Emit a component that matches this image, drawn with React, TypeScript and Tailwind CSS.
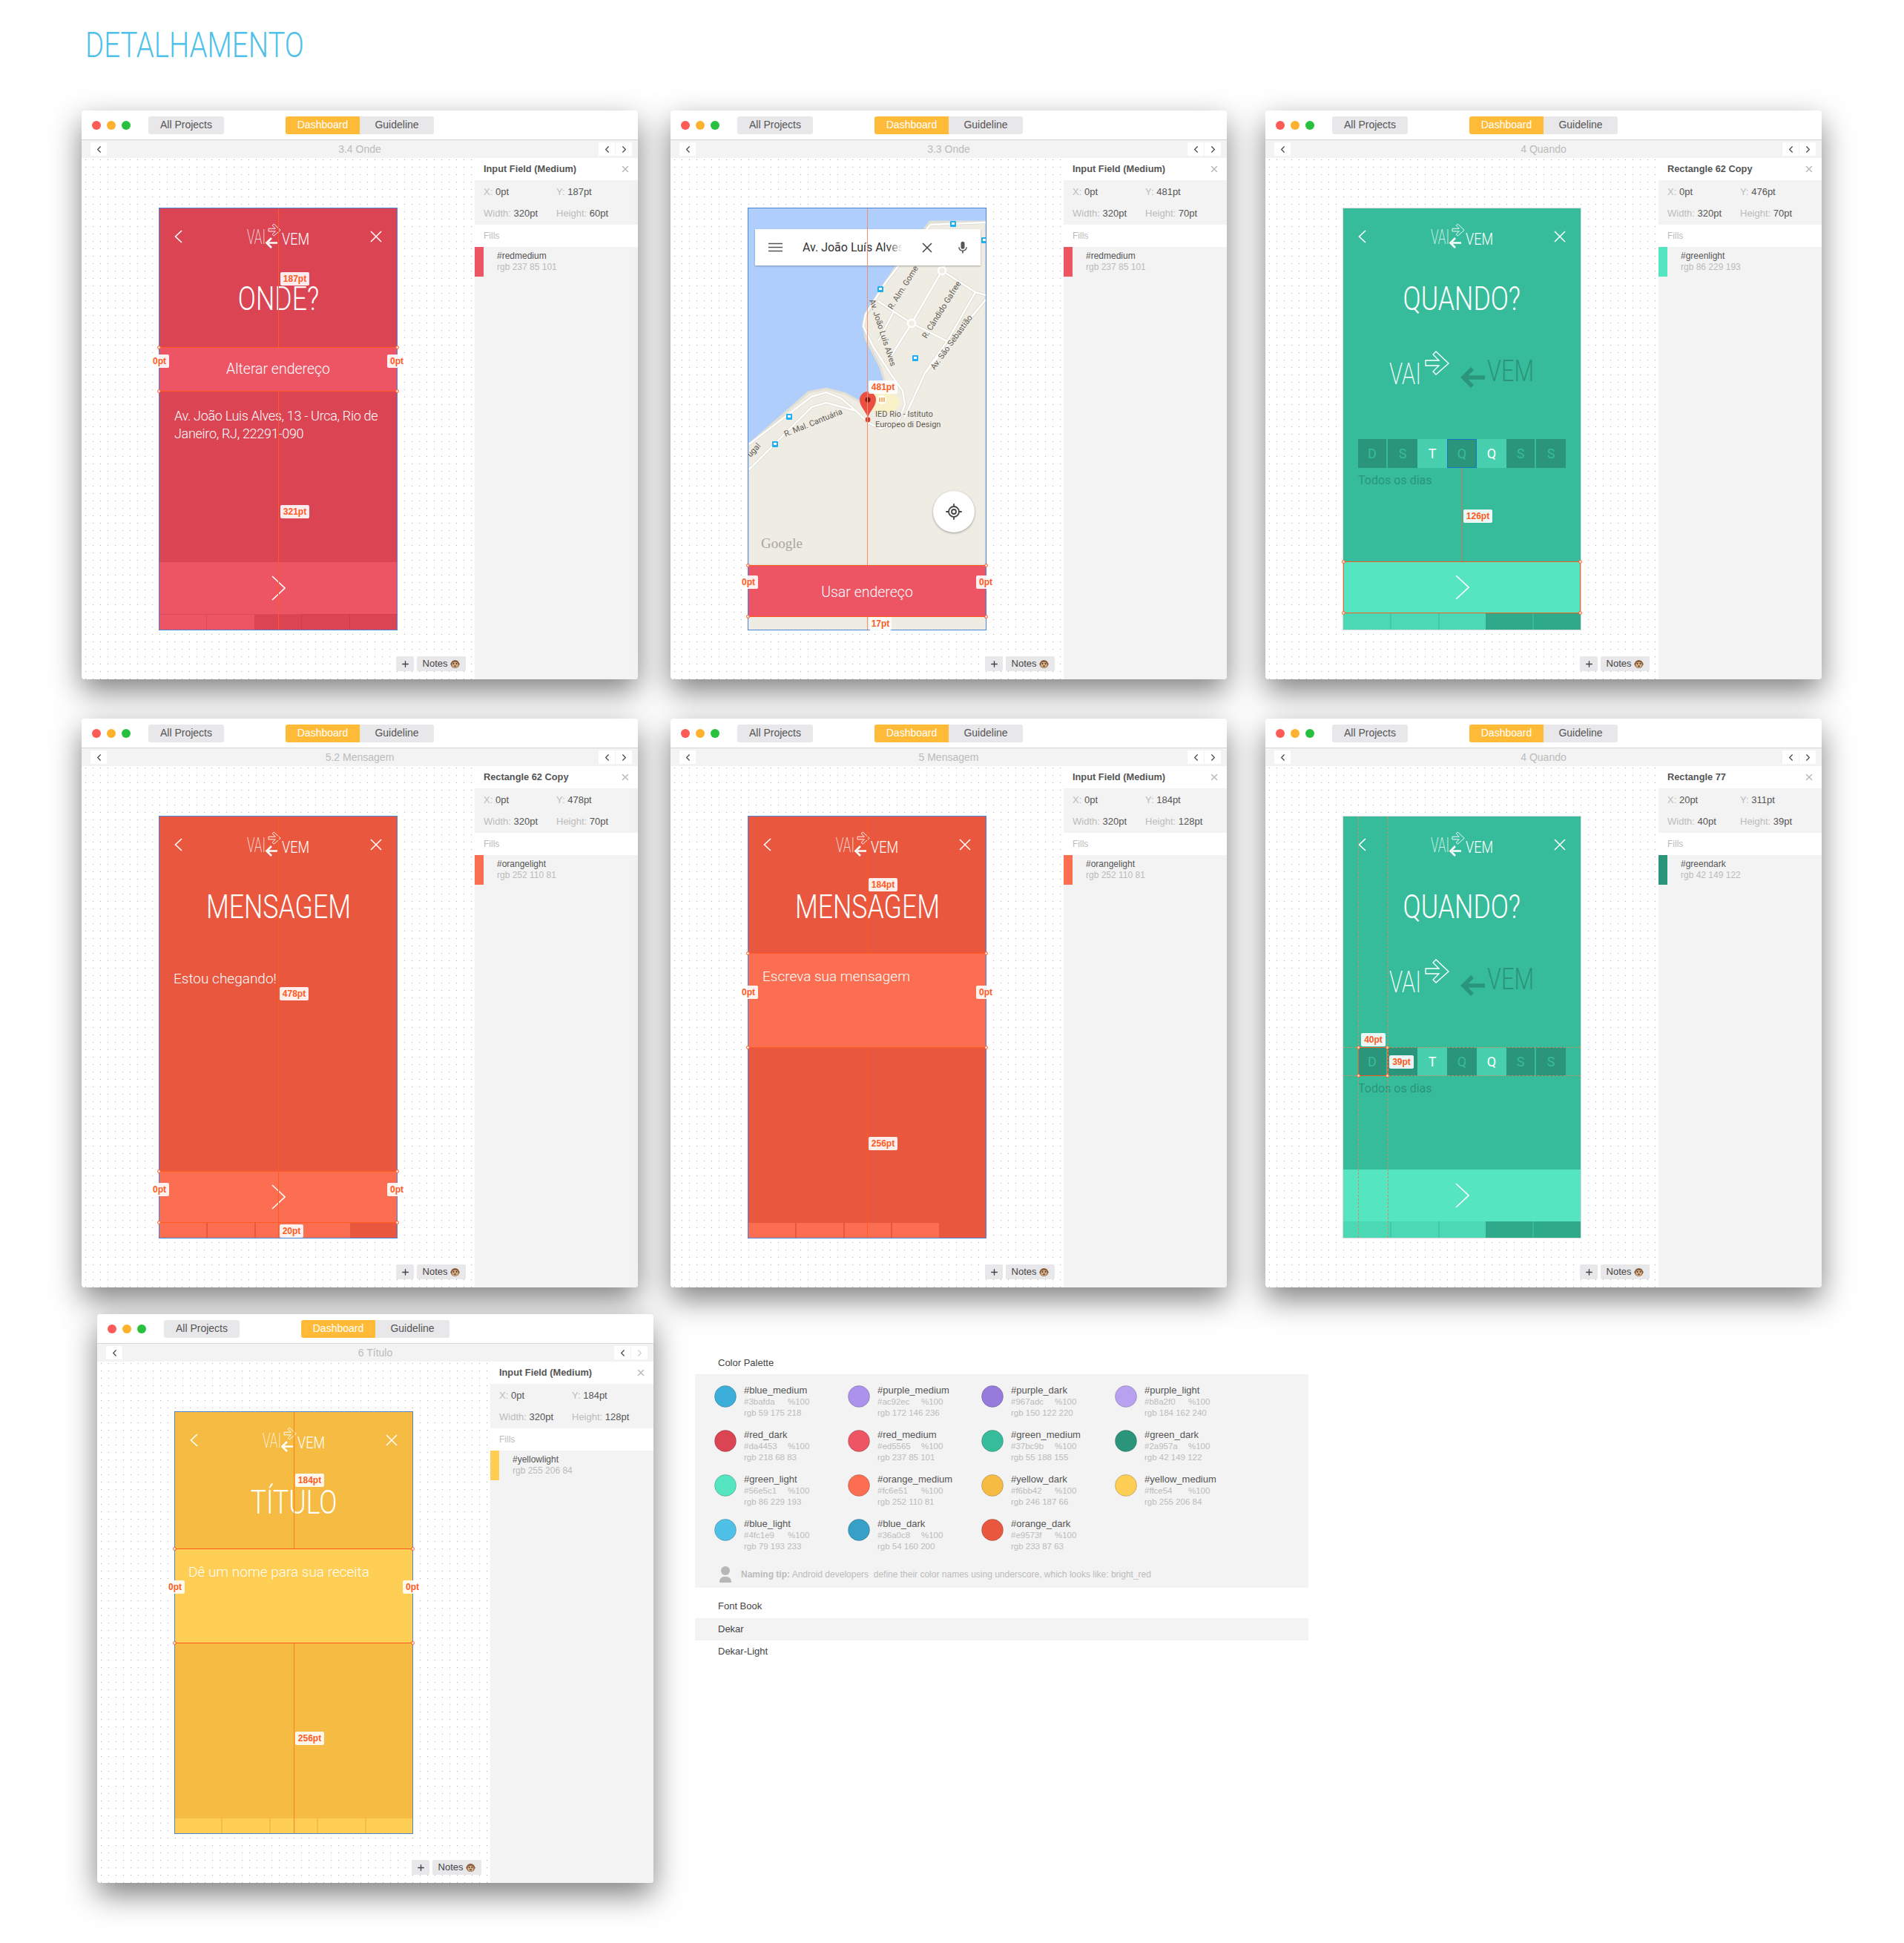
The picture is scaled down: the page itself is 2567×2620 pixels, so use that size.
import { ChevronLeft, ChevronRight, LocateFixed, Plus, X } from 'lucide-react';
import type { ReactNode } from 'react';

const DEKAR = "font-['Roboto',sans-serif] font-light";

const PALETTE = [
  ['#blue_medium', '#3bafda', 'rgb 59 175 218'],
  ['#purple_medium', '#ac92ec', 'rgb 172 146 236'],
  ['#purple_dark', '#967adc', 'rgb 150 122 220'],
  ['#purple_light', '#b8a2f0', 'rgb 184 162 240'],
  ['#red_dark', '#da4453', 'rgb 218 68 83'],
  ['#red_medium', '#ed5565', 'rgb 237 85 101'],
  ['#green_medium', '#37bc9b', 'rgb 55 188 155'],
  ['#green_dark', '#2a957a', 'rgb 42 149 122'],
  ['#green_light', '#56e5c1', 'rgb 86 229 193'],
  ['#orange_medium', '#fc6e51', 'rgb 252 110 81'],
  ['#yellow_dark', '#f6bb42', 'rgb 246 187 66'],
  ['#yellow_medium', '#ffce54', 'rgb 255 206 84'],
  ['#blue_light', '#4fc1e9', 'rgb 79 193 233'],
  ['#blue_dark', '#36a0c8', 'rgb 54 160 200'],
  ['#orange_dark', '#e9573f', 'rgb 233 87 63'],
];

const ROADS = [
  'M245 22 L320 19',
  'M245 22 L185 100 L158 143 L155 159 L168 186 L191 222 L208 246 L211 265 L201 289 L178 297 L161 289 L145 273 L125 256 L105 248 L85 254 L1 318',
  'M145 273 L105 262 L85 268 L1 352',
  'M261 84 L220 155 L188 206',
  'M175 125 L220 155 L268 179 L306 113 L261 84',
  'M306 113 L320 117',
  'M196 139 L175 179',
  'M320 123 L238 222 L211 281',
  'M268 179 L238 222',
  'M261 84 L285 45',
];

const BUSES = [[276, 21], [318, 43], [178, 109], [225, 202], [55, 281], [36, 318]];

function MonkeyIcon() {
  return (
    <svg viewBox="0 0 14 14" className="w-[13px] h-[13px]">
      <circle cx="2" cy="7" r="1.8" fill="#a8784f" />
      <circle cx="12" cy="7" r="1.8" fill="#a8784f" />
      <circle cx="7" cy="7" r="6" fill="#8a5d3b" />
      <ellipse cx="7" cy="8.2" rx="4.4" ry="4.2" fill="#d8b48c" />
      <circle cx="5" cy="6.4" r="0.9" fill="#2b1c12" />
      <circle cx="9" cy="6.4" r="0.9" fill="#2b1c12" />
      <ellipse cx="7" cy="10" rx="2" ry="1" fill="#7a5233" />
    </svg>
  );
}

function Tag({ className, children }: { className: string; children: ReactNode }) {
  return (
    <div className={`absolute z-20 h-[18px] flex items-center justify-center rounded-[2px] bg-white/90 text-[12px] font-bold text-[#ff5a1f] ${className}`}>
      {children}
    </div>
  );
}

function VLine({ className }: { className: string }) {
  return <div className={`absolute z-10 left-[160px] w-px ${className}`} />;
}

function Handle({ className }: { className: string }) {
  return <div className={`absolute w-[5px] h-[5px] rounded-full border border-[#ff5a1f] bg-white/70 ${className}`} />;
}

// selection box with corner handles
function Selection({ className }: { className: string }) {
  return (
    <div className={`absolute z-10 left-0 w-[320px] border-y border-[#ff5a1f] ${className}`}>
      <Handle className="-left-[3px] -top-[3px]" />
      <Handle className="-right-[3px] -top-[3px]" />
      <Handle className="-left-[3px] -bottom-[3px]" />
      <Handle className="-right-[3px] -bottom-[3px]" />
    </div>
  );
}

function OutlineArrow({ width = 1.3 }: { width?: number }) {
  return <path d="M0 12 H18 L10 4 L14 0 L31 16 L14 31 L10 27 L18 19 H0 Z" fill="none" stroke="#fff" strokeWidth={width} />;
}

function Logo() {
  return (
    <svg viewBox="0 0 84 34" className="w-[84px] h-[34px] overflow-visible" fill="none">
      <text x="0" y="27" fontFamily="Roboto, sans-serif" fontWeight="200" fontSize="27" fill="#fff" fillOpacity="0.9" textLength="25" lengthAdjust="spacingAndGlyphs">VAI</text>
      <g transform="translate(29 0) scale(0.52)">
        <OutlineArrow width={1.8} />
      </g>
      <path d="M41 25.5 H29 M33 19 L26.5 25.5 L33 32" stroke="#fff" strokeWidth="2.6" />
      <text x="47" y="28" fontFamily="Roboto, sans-serif" fontWeight="300" fontSize="22.5" fill="#fff" textLength="37" lengthAdjust="spacingAndGlyphs">VEM</text>
    </svg>
  );
}

function BigLogo() {
  return (
    <svg viewBox="0 0 195 50" className="w-[195px] h-[50px] overflow-visible" fill="none">
      <text x="0" y="44" fontFamily="Roboto, sans-serif" fontWeight="200" fontSize="41" fill="#fff" textLength="43" lengthAdjust="spacingAndGlyphs">VAI</text>
      <g transform="translate(49 0)">
        <OutlineArrow />
      </g>
      <path d="M129 35 H104 M112 23 L100 35 L112 47" stroke="#2a957a" strokeWidth="5.5" />
      <text x="132" y="40" fontFamily="Roboto, sans-serif" fontWeight="300" fontSize="41" fill="#2a957a" textLength="63" lengthAdjust="spacingAndGlyphs">VEM</text>
    </svg>
  );
}

function AppHeader() {
  return (
    <div className="h-[76px] shrink-0 px-5 grid grid-cols-[1fr_84px_1fr] items-center">
      <svg viewBox="0 0 11 18" className="w-[11px] h-[18px]" fill="none">
        <path d="M10 1 L1.5 9 L10 17" stroke="#fff" strokeWidth="1.6" />
      </svg>
      <Logo />
      <svg viewBox="0 0 16 16" className="w-[16px] h-[16px] justify-self-end" fill="none">
        <path d="M1 1 L15 15 M15 1 L1 15" stroke="#fff" strokeWidth="1.5" />
      </svg>
    </div>
  );
}

function ScreenTitle({ children }: { children: ReactNode }) {
  return (
    <div className="h-[91px] shrink-0 flex items-center justify-center">
      <span className={`${DEKAR} text-[44px] leading-none text-white scale-x-[.81] whitespace-nowrap`}>{children}</span>
    </div>
  );
}

function NextBar({ className }: { className: string }) {
  return (
    <div className={`h-[70px] shrink-0 flex items-center justify-center ${className}`}>
      <svg viewBox="0 0 19 34" className="w-[19px] h-[34px]" fill="none">
        <path d="M1 1 L18 17 L1 33" stroke="#fff" strokeWidth="1.6" />
      </svg>
    </div>
  );
}

function Progress({ className, segments }: { className: string; segments: string[] }) {
  return (
    <div className={`flex shrink-0 ${className}`}>
      {segments.map((segment, i) => (
        <div key={i} className={`flex-1 ${segment}`} />
      ))}
    </div>
  );
}

function SideTags({ className }: { className: string }) {
  return (
    <>
      <Tag className={`-left-[13px] w-[26px] ${className}`}>0pt</Tag>
      <Tag className={`-right-[13px] w-[26px] ${className}`}>0pt</Tag>
    </>
  );
}

function Window({ title, name, y, x = '0pt', width = '320pt', height, fill, fillName, rgb, nextOff, children }: {
  title: string; name: string; y: string; x?: string; width?: string; height: string;
  fill: string; fillName: string; rgb: string; nextOff?: boolean; children: ReactNode;
}) {
  return (
    <div className="w-[750px] h-[767px] shrink-0 flex flex-col bg-white rounded-[4px] shadow-[0_16px_40px_rgba(0,0,0,0.5)]">
      <div className="h-[40px] shrink-0 flex items-center border-b border-[#d6d6d6] rounded-t-[4px]">
        <div className="flex gap-2 ml-[14px]">
          <span className="w-3 h-3 rounded-full bg-[#fc5b57]" />
          <span className="w-3 h-3 rounded-full bg-[#fdb22f]" />
          <span className="w-3 h-3 rounded-full bg-[#27c13f]" />
        </div>
        <div className="ml-[24px] w-[102px] h-6 flex items-center justify-center rounded-[3px] bg-[#e8e7ea] text-[14px] text-[#555]">All Projects</div>
        <div className="ml-[83px] flex h-6 w-[200px] rounded-[3px] overflow-hidden text-[14px]">
          <div className="w-[100px] flex items-center justify-center bg-[#ffbb38] text-white">Dashboard</div>
          <div className="w-[100px] flex items-center justify-center bg-[#e8e7ea] text-[#555]">Guideline</div>
        </div>
      </div>
      <div className="h-6 shrink-0 grid grid-cols-[1fr_auto_1fr] items-center px-3 bg-[#f3f3f3]">
        <div className="w-[22px] h-[18px] flex items-center justify-center bg-white text-[#444]">
          <ChevronLeft size={15} strokeWidth={1.8} />
        </div>
        <div className="text-[14px] text-[#bbb]">{title}</div>
        <div className="flex justify-end gap-px -mr-1">
          <div className="w-[22px] h-[18px] flex items-center justify-center bg-white text-[#444]">
            <ChevronLeft size={15} strokeWidth={1.8} />
          </div>
          <div className={`w-[22px] h-[18px] flex items-center justify-center bg-white ${nextOff ? 'text-[#ccc]' : 'text-[#444]'}`}>
            <ChevronRight size={15} strokeWidth={1.8} />
          </div>
        </div>
      </div>
      <div className="flex-1 flex min-h-0">
        <div className="w-[530px] flex flex-col pt-[68px] pl-[105px] pr-3 pb-[11px] rounded-bl-[4px] bg-[radial-gradient(circle_at_0.5px_0.5px,#aaaaaa_0.7px,transparent_0.8px)] bg-[length:10px_10px] bg-[position:5px_2px]">
          {children}
          <div className="mt-auto flex justify-end gap-1">
            <div className="w-6 h-5 flex items-center justify-center rounded-[2px] bg-[#e8e7ea] text-[#444]">
              <Plus size={13} strokeWidth={2.5} />
            </div>
            <div className="w-[66px] h-5 flex items-center justify-center gap-1 rounded-[2px] bg-[#e8e7ea] text-[13px] text-[#444]">
              Notes <MonkeyIcon />
            </div>
          </div>
        </div>
        <div className="w-[220px] flex flex-col bg-[#f3f3f3] rounded-br-[4px]">
          <div className="h-[30px] shrink-0 flex items-center justify-between pl-3 pr-[10px] bg-white">
            <span className="text-[12.8px] font-bold text-[#555]">{name}</span>
            <X size={14} strokeWidth={2.6} className="text-[#bbb]" />
          </div>
          <div className="h-[60px] shrink-0 grid grid-cols-[98px_1fr] content-center gap-y-[12px] pl-3 text-[13px] leading-[17px] text-[#555]">
            <div><span className="text-[#bbb]">X:</span> {x}</div>
            <div><span className="text-[#bbb]">Y:</span> {y}</div>
            <div><span className="text-[#bbb]">Width:</span> {width}</div>
            <div><span className="text-[#bbb]">Height:</span> {height}</div>
          </div>
          <div className="h-[30px] shrink-0 flex items-center pl-3 bg-white text-[12px] text-[#bbb]">Fills</div>
          <div className="h-10 flex">
            <div className={`w-3 ${fill}`} />
            <div className="ml-[18px] flex flex-col justify-center text-[12px] leading-[15px]">
              <span className="text-[#555]">{fillName}</span>
              <span className="text-[#bbb]">{rgb}</span>
            </div>
          </div>
        </div>
      </div>
    </div>
  );
}

function OndeScreen() {
  return (
    <div className="relative w-[320px] h-[568px] shrink-0 flex flex-col bg-[#da4453] outline outline-1 outline-[#4a85d8]">
      <AppHeader />
      <ScreenTitle>ONDE?</ScreenTitle>
      <div className="h-5 shrink-0" />
      <div className={`h-[60px] shrink-0 flex items-center justify-center bg-[#ed5565] ${DEKAR} text-[19.5px] text-white`}>Alterar endereço</div>
      <div className={`flex-1 px-5 pt-[21px] ${DEKAR} text-[18px] tracking-[-0.3px] leading-6 text-white whitespace-nowrap`}>
        Av. João Luis Alves, 13 - Urca, Rio de<br />Janeiro, RJ, 22291-090
      </div>
      <NextBar className="bg-[#ed5565]" />
      <Progress className="h-[21px]" segments={[
        'bg-[#ed5565] border-t border-[#d94a5a]', 'bg-[#ed5565] border-t border-l border-[#d94a5a]',
        'bg-[#da4453] border-t border-[#d94a5a]', 'bg-[#da4453] border-t border-l border-[#d03c4b]', 'bg-[#da4453] border-t border-l border-[#d03c4b]',
      ]} />
      <VLine className="top-0 h-[187px] bg-[#ff5a1f]" />
      <VLine className="top-[247px] h-[321px] bg-[#ff5a1f]" />
      <Selection className="top-[187px] h-[60px]" />
      <SideTags className="top-[197px]" />
      <Tag className="left-[163px] top-[86px] w-[39px]">187pt</Tag>
      <Tag className="left-[163px] top-[400px] w-[39px]">321pt</Tag>
    </div>
  );
}

function MapScreen() {
  return (
    <div className="relative w-[320px] h-[568px] shrink-0 flex flex-col bg-[#efece4] outline outline-1 outline-[#4a85d8]">
      <svg viewBox="0 0 320 481" className="w-[320px] h-[481px] shrink-0">
        <rect width="320" height="481" fill="#afcefc" />
        <path d="M245 18 H320 V481 H0 V319 L81 248 L105 243 L131 250 L151 261 L185 238 L178 214 L158 175 L155 153 L175 115 L198 80 Z" fill="#efece4" stroke="#e2dfd5" strokeWidth="3" />
        <ellipse cx="182" cy="262" rx="22" ry="14" fill="#f9f1c7" />
        {ROADS.map((d) => (
          <path key={d} d={d} fill="none" stroke="#dcd8cd" strokeWidth="4" />
        ))}
        {ROADS.map((d) => (
          <path key={d} d={d} fill="none" stroke="#fff" strokeWidth="2.5" />
        ))}
        <circle cx="261" cy="84" r="5" fill="#efece4" stroke="#fff" strokeWidth="2.5" />
        <circle cx="220" cy="155" r="5" fill="#efece4" stroke="#fff" strokeWidth="2.5" />
        {BUSES.map(([bx, by]) => (
          <g key={bx}>
            <rect x={bx - 4} y={by - 4} width="8" height="8" rx="1" fill="#1eb1f2" />
            <rect x={bx - 2} y={by - 2} width="4" height="3" fill="#fff" />
          </g>
        ))}
        <g fontFamily="Roboto, sans-serif" fontSize="11" fill="#5f5b53">
          <text transform="translate(194 137) rotate(-58)">R. Alm. Gome</text>
          <text transform="translate(240 176) rotate(-58)">R. Cândido Gafree</text>
          <text transform="translate(251 218) rotate(-54)">Av. São Sebastião</text>
          <text transform="translate(163 124) rotate(72)">Av. João Luís Alves</text>
          <text transform="translate(50 308) rotate(-22)">R. Mal. Cantuária</text>
          <text transform="translate(3 336) rotate(-48)">ugal</text>
          <text x="171" y="281">IED Rio - Istituto</text>
          <text x="171" y="295">Europeo di Design</text>
        </g>
        <circle cx="180" cy="258" r="6" fill="#fff" />
        <path d="M177 255 V261 M180 255 V261 M183 255 V261" stroke="#f59331" strokeWidth="1.4" />
        <path d="M161 282 C158 273 150 267 150 258 a11 11 0 1 1 22 0 C172 267 164 273 161 282Z" fill="#ea4f42" />
        <circle cx="161" cy="258" r="3.6" fill="#7f1a12" />
        <circle cx="161" cy="285" r="3.4" fill="#d8432f" />
        <text x="17" y="458" fontFamily="'Liberation Serif', serif" fontSize="19" fill="#a9a69e">Google</text>
      </svg>
      <div className={`h-[70px] shrink-0 flex items-center justify-center bg-[#ed5565] pt-[3px] ${DEKAR} text-[19.5px] text-white`}>Usar endereço</div>
      <div className="absolute left-[9px] top-[28px] w-[304px] h-[49px] flex items-center bg-white shadow-[0_1px_2px_rgba(0,0,0,0.3)]">
        <svg viewBox="0 0 19 13" className="ml-[18px] w-[19px] h-[13px]">
          <path d="M0 1.5 H19 M0 6.5 H19 M0 11.5 H19" stroke="#555" strokeWidth="1.4" />
        </svg>
        <div className="relative ml-[27px] w-[135px] overflow-hidden whitespace-nowrap font-['Roboto',sans-serif] text-[16px] text-[#333]">
          Av. João Luís Alves
          <div className="absolute right-0 top-0 bottom-0 w-5 bg-gradient-to-r from-transparent to-white" />
        </div>
        <svg viewBox="0 0 14 14" className="ml-[26px] w-[14px] h-[14px]">
          <path d="M1 1 L13 13 M13 1 L1 13" stroke="#444" strokeWidth="1.5" />
        </svg>
        <svg viewBox="0 0 24 24" className="ml-[31px] w-[20px] h-[20px]" fill="#555">
          <path d="M12 14a3 3 0 0 0 3-3V5a3 3 0 0 0-6 0v6a3 3 0 0 0 3 3zm5.3-3c0 3-2.5 5.1-5.3 5.1S6.7 14 6.7 11H5c0 3.4 2.7 6.2 6 6.7V21h2v-3.3c3.3-.5 6-3.3 6-6.7h-1.7z" />
        </svg>
      </div>
      <div className="absolute left-[249px] top-[381px] w-14 h-14 flex items-center justify-center rounded-full bg-white shadow-[0_1px_3px_rgba(0,0,0,0.35)] text-[#444]">
        <LocateFixed size={24} strokeWidth={1.8} />
      </div>
      <VLine className="top-0 h-[481px] w-[2px] bg-[#f58f6f]" />
      <VLine className="top-[551px] h-[17px] w-[2px] bg-[#f58f6f]" />
      <Selection className="top-[481px] h-[70px]" />
      <SideTags className="top-[495px]" />
      <Tag className="left-[162px] top-[232px] w-[39px]">481pt</Tag>
      <Tag className="left-[163px] top-[551px] w-[30px]">17pt</Tag>
    </div>
  );
}

function DayCell({ letter, on, selected, split }: { letter: string; on?: boolean; selected?: boolean; split?: boolean }) {
  return (
    <div className={`h-[39px] flex items-center justify-center font-['Roboto',sans-serif] text-[18px] ${on ? 'bg-[#48cfad] text-white' : 'bg-[#2a957a] text-[#37bc9b]'} ${split ? 'border-r-2 border-[#37bc9b]' : ''} ${selected ? 'ring-1 ring-inset ring-[#1c74c4]' : ''}`}>
      {letter}
    </div>
  );
}

function QuandoScreen({ selectedQ, children }: { selectedQ?: boolean; children: ReactNode }) {
  return (
    <div className="relative w-[320px] h-[568px] shrink-0 flex flex-col bg-[#37bc9b] outline outline-1 outline-[#dddddd]">
      <AppHeader />
      <ScreenTitle>QUANDO?</ScreenTitle>
      <div className="mt-[26px] ml-[62px] shrink-0">
        <BigLogo />
      </div>
      <div className="mt-[68px] mx-5 grid grid-cols-7 shrink-0">
        <DayCell letter="D" split />
        <DayCell letter="S" />
        <DayCell letter="T" on />
        <DayCell letter="Q" selected={selectedQ} />
        <DayCell letter="Q" on />
        <DayCell letter="S" split />
        <DayCell letter="S" />
      </div>
      <div className="mt-[8px] ml-5 font-['Roboto',sans-serif] text-[16px] leading-[18px] text-[#2a957a]">Todos os dias</div>
      <div className="flex-1" />
      <NextBar className="bg-[#56e5c1]" />
      <Progress className="h-[22px]" segments={[
        'bg-[#4bd9b5]', 'bg-[#4bd9b5] border-l-2 border-[#43c9a8]', 'bg-[#4bd9b5] border-l-2 border-[#43c9a8]',
        'bg-[#2ea98a]', 'bg-[#2ea98a] border-l-2 border-[#37bc9b]',
      ]} />
      {children}
    </div>
  );
}

function OrangeHeader() {
  return (
    <>
      <AppHeader />
      <ScreenTitle>MENSAGEM</ScreenTitle>
    </>
  );
}

function MensagemFinalScreen() {
  return (
    <div className="relative w-[320px] h-[568px] shrink-0 flex flex-col bg-[#e9573f] outline outline-1 outline-[#4a85d8]">
      <OrangeHeader />
      <div className={`flex-1 px-[19px] pt-[40px] ${DEKAR} text-[19px] leading-6 text-white`}>Estou chegando!</div>
      <NextBar className="bg-[#fc6e51]" />
      <Progress className="h-[20px]" segments={[
        'bg-[#fc6e51]', 'bg-[#fc6e51] border-l-2 border-[#e9573f]', 'bg-[#fc6e51] border-l-2 border-[#e9573f]',
        'bg-[#fc6e51]', 'bg-[#e9573f]',
      ]} />
      <VLine className="top-0 h-[568px] bg-[#ff5a1f]" />
      <Selection className="top-[478px] h-[70px]" />
      <SideTags className="top-[494px]" />
      <Tag className="left-[162px] top-[230px] w-[39px]">478pt</Tag>
      <Tag className="left-[162px] top-[550px] w-[32px]">20pt</Tag>
    </div>
  );
}

function MensagemScreen() {
  return (
    <div className="relative w-[320px] h-[568px] shrink-0 flex flex-col bg-[#e9573f] outline outline-1 outline-[#4a85d8]">
      <OrangeHeader />
      <div className="h-[17px] shrink-0" />
      <div className={`h-[128px] shrink-0 px-[19px] pt-[20px] bg-[#fc6e51] ${DEKAR} text-[19px] leading-6 text-white`}>Escreva sua mensagem</div>
      <div className="flex-1" />
      <Progress className="h-[20px]" segments={[
        'bg-[#fc6e51]', 'bg-[#fc6e51] border-l-2 border-[#e9573f]', 'bg-[#fc6e51] border-l-2 border-[#e9573f]',
        'bg-[#fc6e51] border-l-2 border-[#e9573f]', 'bg-[#e9573f]',
      ]} />
      <VLine className="top-0 h-[184px] bg-[#ff5a1f]" />
      <VLine className="top-[312px] h-[256px] bg-[#ff5a1f]" />
      <Selection className="top-[184px] h-[128px]" />
      <SideTags className="top-[228px]" />
      <Tag className="left-[162px] top-[83px] w-[39px]">184pt</Tag>
      <Tag className="left-[162px] top-[432px] w-[39px]">256pt</Tag>
    </div>
  );
}

function TituloScreen() {
  return (
    <div className="relative w-[320px] h-[568px] shrink-0 flex flex-col bg-[#f6bb42] outline outline-1 outline-[#4a85d8]">
      <AppHeader />
      <ScreenTitle>TÍTULO</ScreenTitle>
      <div className="h-[17px] shrink-0" />
      <div className={`h-[128px] shrink-0 px-[18px] pt-[20px] bg-[#ffce54] ${DEKAR} text-[19px] leading-6 text-white`}>Dê um nome para sua receita</div>
      <div className="flex-1" />
      <Progress className="h-[20px]" segments={[
        'bg-[#ffce54]', 'bg-[#ffce54] border-l-2 border-[#f6bb42]', 'bg-[#ffce54] border-l-2 border-[#f6bb42]',
        'bg-[#ffce54] border-l-2 border-[#f6bb42]', 'bg-[#ffce54] border-l-2 border-[#f6bb42]',
      ]} />
      <VLine className="top-0 h-[184px] w-[2px] bg-[#ff7f1f]" />
      <VLine className="top-[312px] h-[256px] w-[2px] bg-[#ff7f1f]" />
      <Selection className="top-[184px] h-[128px]" />
      <SideTags className="top-[227px]" />
      <Tag className="left-[162px] top-[83px] w-[39px]">184pt</Tag>
      <Tag className="left-[162px] top-[431px] w-[39px]">256pt</Tag>
    </div>
  );
}

function PalettePanel() {
  return (
    <div className="ml-[56px] mt-[56px] w-[827px] text-[13px] text-[#444]">
      <div className="h-[25px] pl-[31px]">Color Palette</div>
      <div className="h-[288px] bg-[#f3f3f3] pt-[15px] pl-[26px]">
        <div className="grid grid-cols-[180px_180px_180px_180px] auto-rows-[60px]">
          {PALETTE.map(([name, hex, rgb]) => (
            <div key={name} className="flex gap-[10px]">
              <svg viewBox="0 0 30 30" className="w-[30px] h-[30px] shrink-0">
                <circle cx="15" cy="15" r="14.5" fill={hex} stroke="#000" strokeOpacity="0.2" />
              </svg>
              <div className="flex flex-col text-[11.5px] leading-[15.5px] text-[#bbb]">
                <span className="text-[13px] -mt-px text-[#555]">{name}</span>
                <div className="flex">
                  <span className="w-[59px]">{hex}</span>
                  <span>%100</span>
                </div>
                <span>{rgb}</span>
              </div>
            </div>
          ))}
        </div>
        <div className="mt-[3px] h-[23px] flex items-center gap-3 text-[12px] text-[#bbb]">
          <svg viewBox="0 0 18 23" className="ml-[6px] w-[18px] h-[23px]" fill="#b9b6b6">
            <circle cx="9" cy="7" r="6" />
            <path d="M1 23 C1 16 5 15 9 15 C13 15 17 16 17 23 Z" />
          </svg>
          <span><b>Naming tip:</b> Android developers&nbsp; define their color names using underscore, which looks like: bright_red</span>
        </div>
      </div>
      <div className="h-[41px] pl-[31px] pt-[15px]">Font Book</div>
      <div className="h-[30px] pl-[31px] flex items-center bg-[#f3f3f3]">Dekar</div>
      <div className="h-[30px] pl-[31px] flex items-center">Dekar-Light</div>
    </div>
  );
}

export default function App() {
  return (
    <div className="w-[2567px] h-[2620px] bg-white font-['Liberation_Sans',Arial,sans-serif]">
      <div className="h-[149px] pl-[115px] pt-[37px]">
        <h1 className="origin-left scale-x-[.8] font-['Roboto',sans-serif] font-light text-[48px] leading-[48px] text-[#4fc1e9]">DETALHAMENTO</h1>
      </div>

      <div className="flex pl-[110px]">
        <Window title="3.4 Onde" name="Input Field (Medium)" y="187pt" height="60pt" fill="bg-[#ed5565]" fillName="#redmedium" rgb="rgb 237 85 101">
          <OndeScreen />
        </Window>
        <div className="ml-[44px]">
          <Window title="3.3 Onde" name="Input Field (Medium)" y="481pt" height="70pt" fill="bg-[#ed5565]" fillName="#redmedium" rgb="rgb 237 85 101">
            <MapScreen />
          </Window>
        </div>
        <div className="ml-[52px]">
          <Window title="4 Quando" name="Rectangle 62 Copy" y="476pt" height="70pt" fill="bg-[#56e5c1]" fillName="#greenlight" rgb="rgb 86 229 193">
            <QuandoScreen selectedQ>
              <VLine className="top-[350px] h-[126px] bg-[#c0785a]" />
              <div className="absolute z-10 left-0 top-[476px] w-[320px] h-[70px] border border-[#ff5a1f]">
                <Handle className="-left-[3px] -top-[3px]" />
                <Handle className="-right-[3px] -top-[3px]" />
                <Handle className="-left-[3px] -bottom-[3px]" />
                <Handle className="-right-[3px] -bottom-[3px]" />
              </div>
              <Tag className="left-[162px] top-[406px] w-[39px]">126pt</Tag>
            </QuandoScreen>
          </Window>
        </div>
      </div>

      <div className="flex pl-[110px] mt-[53px]">
        <Window title="5.2 Mensagem" name="Rectangle 62 Copy" y="478pt" height="70pt" fill="bg-[#fc6e51]" fillName="#orangelight" rgb="rgb 252 110 81">
          <MensagemFinalScreen />
        </Window>
        <div className="ml-[44px]">
          <Window title="5 Mensagem" name="Input Field (Medium)" y="184pt" height="128pt" fill="bg-[#fc6e51]" fillName="#orangelight" rgb="rgb 252 110 81">
            <MensagemScreen />
          </Window>
        </div>
        <div className="ml-[52px]">
          <Window title="4 Quando" name="Rectangle 77" x="20pt" y="311pt" width="40pt" height="39pt" fill="bg-[#2a957a]" fillName="#greendark" rgb="rgb 42 149 122">
            <QuandoScreen>
              <div className="absolute z-10 top-0 left-[20px] w-[41px] h-[568px] border-x border-dashed border-[#d08a68]" />
              <div className="absolute z-10 left-0 top-[311px] w-[320px] h-[39px] border-y border-dashed border-[#d08a68]" />
              <div className="absolute z-10 left-[20px] top-[311px] w-[40px] h-[39px] border border-[#ff5a1f]">
                <Handle className="-left-[3px] -top-[3px]" />
                <Handle className="-right-[3px] -top-[3px]" />
                <Handle className="-left-[3px] -bottom-[3px]" />
                <Handle className="-right-[3px] -bottom-[3px]" />
              </div>
              <Tag className="left-[24px] top-[292px] w-[33px]">40pt</Tag>
              <Tag className="left-[62px] top-[322px] w-[33px]">39pt</Tag>
            </QuandoScreen>
          </Window>
        </div>
      </div>

      <div className="flex pl-[131px] mt-[36px]">
        <Window title="6 Título" name="Input Field (Medium)" y="184pt" height="128pt" fill="bg-[#ffce54]" fillName="#yellowlight" rgb="rgb 255 206 84" nextOff>
          <TituloScreen />
        </Window>
        <PalettePanel />
      </div>
    </div>
  );
}
